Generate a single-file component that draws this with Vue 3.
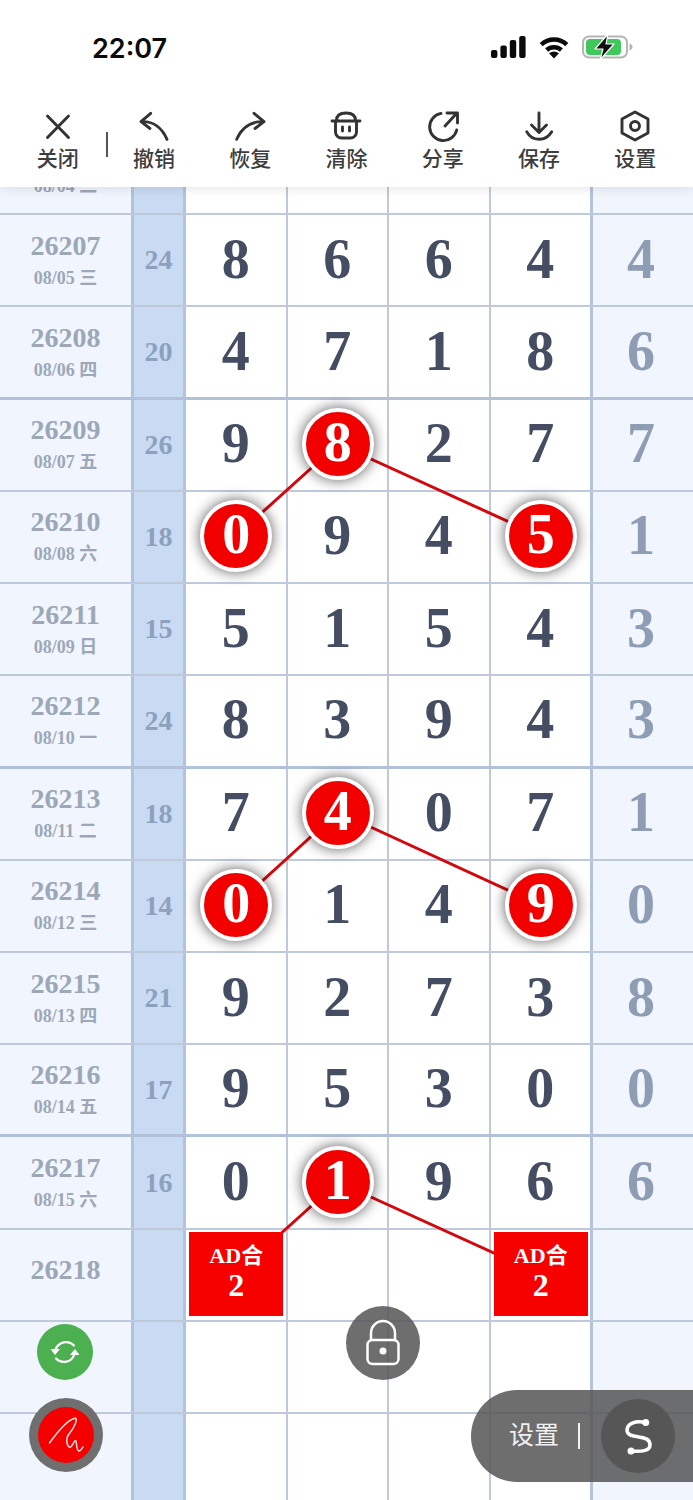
<script setup>
const tools = [
  { key: 'close', label: '关闭' },
  { key: 'undo', label: '撤销' },
  { key: 'redo', label: '恢复' },
  { key: 'clear', label: '清除' },
  { key: 'share', label: '分享' },
  { key: 'save', label: '保存' },
  { key: 'set', label: '设置' }
]

const rows = [
  { id: '', date: '08/04 二', sum: '', nums: ['', '', '', ''], tail: '' },
  { id: '26207', date: '08/05 三', sum: 24, nums: [8, 6, 6, 4], tail: 4 },
  { id: '26208', date: '08/06 四', sum: 20, nums: [4, 7, 1, 8], tail: 6, heavy: true },
  { id: '26209', date: '08/07 五', sum: 26, nums: [9, 8, 2, 7], tail: 7, balls: [1] },
  { id: '26210', date: '08/08 六', sum: 18, nums: [0, 9, 4, 5], tail: 1, balls: [0, 3] },
  { id: '26211', date: '08/09 日', sum: 15, nums: [5, 1, 5, 4], tail: 3 },
  { id: '26212', date: '08/10 一', sum: 24, nums: [8, 3, 9, 4], tail: 3, heavy: true },
  { id: '26213', date: '08/11 二', sum: 18, nums: [7, 4, 0, 7], tail: 1, balls: [1] },
  { id: '26214', date: '08/12 三', sum: 14, nums: [0, 1, 4, 9], tail: 0, balls: [0, 3] },
  { id: '26215', date: '08/13 四', sum: 21, nums: [9, 2, 7, 3], tail: 8 },
  { id: '26216', date: '08/14 五', sum: 17, nums: [9, 5, 3, 0], tail: 0, heavy: true },
  { id: '26217', date: '08/15 六', sum: 16, nums: [0, 1, 9, 6], tail: 6, balls: [1] },
  { id: '26218', date: '', sum: '', nums: ['', '', '', ''], tail: '', ads: [0, 3] },
  { id: '', date: '', sum: '', nums: ['', '', '', ''], tail: '' },
  { id: '', date: '', sum: '', nums: ['', '', '', ''], tail: '' }
]

const links = [
  [338, 444, 236, 536],
  [338, 444, 540, 536],
  [338, 812, 236, 905],
  [338, 812, 540, 905],
  [338, 1182, 236, 1274],
  [338, 1182, 540, 1274]
]
</script>

<template>
  <div class="page">
    <header class="top">
      <div class="status">
        <span class="time">22:07</span>
        <div class="status-icons">
          <svg class="signal" width="35" height="22" viewBox="0 0 35 22">
            <rect x="0" y="14" width="6.4" height="8" rx="2" />
            <rect x="9.4" y="9.5" width="6.4" height="12.5" rx="2" />
            <rect x="18.8" y="4" width="6.4" height="18" rx="2" />
            <rect x="28.2" y="0" width="6.4" height="22" rx="2" />
          </svg>
          <svg class="wifi" width="30" height="24" viewBox="0 0 30 24">
            <path d="M2.2 9.6a18.5 18.5 0 0 1 25.6 0" />
            <path d="M7.6 15a11 11 0 0 1 14.8 0" />
            <path class="wedge" d="M15 23.5 10 18.3Q15 14.6 20 18.3Z" />
          </svg>
          <svg class="battery" width="51" height="26" viewBox="0 0 51 26">
            <rect x="1" y="2.5" width="44" height="21" rx="6" fill="none" stroke="#b5b5b5" stroke-width="2" />
            <path d="M4 9a4 4 0 0 1 4-4h27a4 4 0 0 1 4 4v8a4 4 0 0 1-4 4H8a4 4 0 0 1-4-4Z" fill="#3fc85c" />
            <path d="M47.5 9.5c2 .6 3 2 3 3.5s-1 2.900-3 3.500Z" fill="#b5b5b5" />
            <path d="M26 0 13 15h8l-3 11 14-16h-8Z" fill="#111" stroke="#fff" stroke-width="1.200" stroke-linejoin="round" />
          </svg>
        </div>
      </div>
      <nav class="tools">
        <div v-for="tool in tools" :key="tool.key" class="tool" :class="{ split: tool.key === 'close' }">
          <svg class="tool-icon" width="34" height="34" viewBox="0 0 34 34">
            <path v-if="tool.key === 'close'" d="M6.500 6 27.500 27.500M27.500 6 6.500 27.500" />
            <path v-else-if="tool.key === 'undo'" d="M13.700 3.300 4 11.700 13 18.500M4.500 11.700C16 11 25 18 30 29.300" />
            <path v-else-if="tool.key === 'redo'" d="M21 3.300 31 11.700 22 18.500M30.500 11.700C18 11 8.500 18 3.700 29.300" />
            <g v-else-if="tool.key === 'clear'">
              <path d="M3 11H31M7.500 10.500C7.500 5 12 3 17 3S26.500 5 26.500 10.500M6.500 11V22a6 6 0 0 0 6 6H21.500a6 6 0 0 0 6-6V11M13.500 17V21M20.500 17V21" />
            </g>
            <g v-else-if="tool.key === 'share'">
              <path d="M15 3.400A13.700 13.700 0 1 0 30.700 20M19 16 31 3M21 3H31.500V13" />
            </g>
            <path v-else-if="tool.key === 'save'" d="M17 3V22M9.500 15 17 22.500 24.500 15M4.700 21.700C8 28 13 29.300 17 29.300S26 28 29.700 21.700" />
            <g v-else>
              <path d="M17 2 30 9V23L17 30 4 23V9Z" />
              <circle cx="17" cy="16" r="4.500" />
            </g>
          </svg>
          <span class="tool-label">{{ tool.label }}</span>
        </div>
      </nav>
    </header>

    <section class="table">
      <div v-for="(row, r) in rows" :key="r" class="row" :class="{ heavy: row.heavy }">
        <div class="c-id">
          <span class="id" :class="{ solo: !row.date }">{{ row.id }}</span>
          <span v-if="row.date" class="date">{{ row.date }}</span>
        </div>
        <div class="c-sum">{{ row.sum }}</div>
        <div v-for="(n, i) in row.nums" :key="i" class="cell" :class="{ end: i === 3 }">
          <span v-if="row.balls && row.balls.includes(i)" class="ball">{{ n }}</span>
          <span v-else-if="row.ads && row.ads.includes(i)" class="ad">
            <span class="ad-top">AD合</span>
            <span class="ad-num">2</span>
          </span>
          <template v-else>{{ n }}</template>
        </div>
        <div class="c-tail">{{ row.tail }}</div>
      </div>
    </section>

    <svg class="links" width="693" height="1500" viewBox="0 0 693 1500">
      <line v-for="(l, i) in links" :key="i" :x1="l[0]" :y1="l[1]" :x2="l[2]" :y2="l[3]" />
    </svg>

    <div class="fab fab-sync">
      <svg width="56" height="56" viewBox="0 0 56 56">
        <path d="M37 21.500A11 11 0 0 0 18.500 26M19 34.500A11 11 0 0 0 37.500 30" />
        <path class="solid" d="M13.500 25H23L18 31ZM42.500 31H33L38 25Z" />
      </svg>
    </div>
    <div class="fab fab-draw">
      <span class="draw-in">
        <svg width="56" height="56" viewBox="0 0 56 56">
          <path d="M11.500 36C18 27 28 14 36 11.500 41 10 37 20 31 27 27 32 29 38 31 40 34 42 36 32 38 34 39 37 38 43 41 44 43 44 44 41 45 40" />
        </svg>
      </span>
    </div>
    <div class="fab fab-lock">
      <svg width="74" height="74" viewBox="0 0 74 74">
        <path d="M25 34V27a12 12 0 0 1 24 0V34" />
        <rect x="21.500" y="34" width="31" height="24" rx="5" />
        <circle class="solid" cx="37" cy="45" r="3.500" />
      </svg>
    </div>
    <div class="pill">
      <span class="pill-text">设置</span>
      <span class="pill-sep"></span>
      <span class="pill-logo">
        <svg width="74" height="74" viewBox="0 0 74 74">
          <path d="M44.700 23.500C34 21 26 25 26 31 26 37 33 37 38 38 44 39 49 40 49 46 49 52 40 53 30 52" />
          <circle cx="44.700" cy="23.500" r="3.500" />
          <circle cx="30" cy="52" r="3.500" />
        </svg>
      </span>
    </div>
  </div>
</template>

<style scoped>
.page {
  position: relative;
  width: 693px;
  height: 1500px;
  overflow: hidden;
  background: #fff;
  font-family: "Liberation Serif", "Noto Sans CJK SC", serif;
}

.top {
  position: relative;
  z-index: 5;
  height: 187px;
  background: #fff;
  box-shadow: 0 2px 10px rgba(0, 0, 0, 0.1);
}

.status {
  display: flex;
  align-items: center;
  justify-content: space-between;
  height: 94px;
  padding: 0 60px 0 92px;
}

.time {
  padding-top: 2px;
  font: 600 27px/1 Inter, sans-serif;
  color: #0b0b0b;
}

.status-icons {
  display: flex;
  align-items: center;
  gap: 13px;
}

.signal rect { fill: #0b0b0b; }
.wifi path { fill: none; stroke: #0b0b0b; stroke-width: 4.500; }
.wifi .wedge { fill: #0b0b0b; stroke: none; }

.tools {
  display: flex;
  padding: 16px 9.500px 0;
}

.tool {
  position: relative;
  display: flex;
  flex: 1;
  flex-direction: column;
  align-items: center;
}

.split::after {
  content: "";
  position: absolute;
  top: 22px;
  right: -2px;
  width: 1.500px;
  height: 25px;
  background: #555;
}

.tool-icon {
  fill: none;
  stroke: #333;
  stroke-width: 2.900;
  stroke-linecap: round;
  stroke-linejoin: round;
}

.tool-label {
  font: 500 21px/28px "Noto Sans CJK SC", sans-serif;
  color: #3d3d3d;
  margin-top: -1.500px;
}

.table {
  margin-top: -64px;
}

.row {
  display: grid;
  grid-template-columns: 134px 52px 101.500px 101.500px 101.500px 102.500px 1fr;
  height: 92.230px;
  box-sizing: border-box;
  border-bottom: 2px solid #bec9db;
}

.row.heavy {
  border-bottom: 3px solid #b3c1d8;
}

.c-id {
  display: flex;
  flex-direction: column;
  align-items: center;
  justify-content: center;
  box-sizing: border-box;
  padding-top: 3px;
  background: #f1f6fe;
  border-right: 3px solid #b3c3db;
  color: #9ca7b8;
  font-weight: 700;
}

.id {
  min-height: 32px;
  font-size: 28px;
  line-height: 32px;
}

.id.solo {
  margin-bottom: 12px;
}

.date {
  font-size: 18px;
  line-height: 32px;
}

.c-sum {
  display: flex;
  align-items: center;
  justify-content: center;
  background: #c9daf3;
  border-right: 3px solid #b3c3db;
  color: #8ca1bd;
  font-size: 28px;
  font-weight: 700;
}

.cell {
  display: flex;
  align-items: center;
  justify-content: center;
  box-sizing: border-box;
  padding-bottom: 3px;
  border-right: 2px solid #bec9db;
  color: #454d63;
  font-size: 56px;
  font-weight: 700;
  line-height: 1;
}

.cell.end {
  border-right: 3px solid #b3c3db;
}

.c-tail {
  display: flex;
  align-items: center;
  justify-content: center;
  box-sizing: border-box;
  padding: 0 4px 3px 0;
  background: #f1f6fe;
  color: #8e9db4;
  font-size: 56px;
  font-weight: 700;
  line-height: 1;
}

.ball {
  position: relative;
  z-index: 2;
  display: flex;
  flex: none;
  align-items: center;
  justify-content: center;
  box-sizing: border-box;
  width: 72px;
  height: 72px;
  margin: 0 0 -1px 1px;
  padding-bottom: 3px;
  border: 4px solid #fff;
  border-radius: 50%;
  background: #f20000;
  color: #fff;
  box-shadow: 0 0 14px rgba(0, 0, 0, 0.65);
}

.ad {
  position: relative;
  z-index: 2;
  display: flex;
  flex: none;
  flex-direction: column;
  align-items: center;
  justify-content: center;
  box-sizing: border-box;
  width: 94px;
  height: 84px;
  margin: 0 0 -1px 1px;
  padding-bottom: 4px;
  background: #f60000;
  color: #fff;
}

.ad-top {
  font-size: 22px;
  line-height: 26px;
}

.ad-num {
  font-size: 32px;
  line-height: 32px;
}

.links {
  position: absolute;
  top: 0;
  left: 0;
  z-index: 1;
}

.links line {
  stroke: #d3080e;
  stroke-width: 3;
}

.fab {
  position: absolute;
  z-index: 4;
  display: flex;
  align-items: center;
  justify-content: center;
  border-radius: 50%;
}

.fab svg {
  fill: none;
  stroke: #fff;
  stroke-linecap: round;
  stroke-linejoin: round;
}

.fab .solid {
  fill: #fff;
  stroke: none;
}

.fab-sync {
  left: 37px;
  top: 1324px;
  width: 56px;
  height: 56px;
  background: #4caf50;
}

.fab-sync svg { stroke-width: 2.200; }

.fab-draw {
  left: 28.500px;
  top: 1398px;
  width: 74px;
  height: 74px;
  background: #6f6f6f;
}

.draw-in {
  display: flex;
  width: 56px;
  height: 56px;
  border-radius: 50%;
  background: #f50000;
}

.draw-in svg { stroke: #ffdcdc; stroke-width: 1.500; }

.fab-lock {
  left: 346px;
  top: 1306px;
  width: 74px;
  height: 74px;
  background: rgba(85, 85, 85, 0.85);
}

.fab-lock svg { stroke-width: 2.500; }

.pill {
  position: absolute;
  z-index: 4;
  left: 471px;
  top: 1390px;
  display: flex;
  align-items: center;
  width: 222px;
  height: 92px;
  box-sizing: border-box;
  padding-left: 38px;
  border-radius: 46px 0 0 46px;
  background: rgba(85, 85, 85, 0.85);
}

.pill-text {
  margin-bottom: 6px;
  font: 400 25px/1 "Noto Sans CJK SC", sans-serif;
  color: rgba(255, 255, 255, 0.92);
}

.pill-sep {
  width: 2px;
  height: 26px;
  margin: 0 21px 0 19px;
  background: rgba(255, 255, 255, 0.9);
}

.pill-logo {
  display: flex;
  width: 74px;
  height: 74px;
  border-radius: 50%;
  background: #565656;
}

.pill-logo path {
  fill: none;
  stroke: #fff;
  stroke-width: 3.500;
  stroke-linecap: round;
}

.pill-logo circle { fill: #fff; }
</style>
